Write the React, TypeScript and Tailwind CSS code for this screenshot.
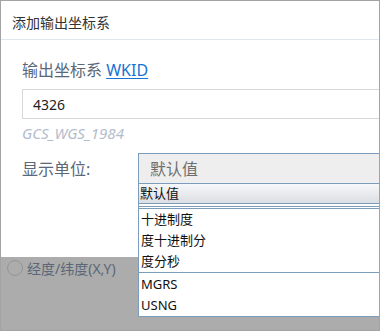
import React from 'react';

const units = ['十进制度', '度十进制分', '度分秒'];
const grids = ['MGRS', 'USNG'];

export default function App() {
  return (
    <div className="relative w-[380px] h-[331px] border border-[#a3a3a3] bg-white overflow-hidden flex flex-col font-['Noto_Sans','Noto_Sans_CJK_SC',sans-serif]">
      {/* header */}
      <div className="h-[39px] shrink-0 border-b border-[#e0e7ee] flex items-center pl-[11px] pt-[4px] text-[14px] text-[#333]">
        添加输出坐标系
      </div>

      {/* body */}
      <div className="h-[217px] shrink-0 pl-[21px] pt-[18px]">
        <div className="h-[24px] leading-[24px] text-[16px] text-[#5a6778]">
          输出坐标系 <span className="text-[#1873d3] underline underline-offset-2">WKID</span>
        </div>
        <div className="mt-[7px] w-[400px] h-[30px] border border-[#d7d7d7] pl-[10px] flex items-center text-[14px] text-[#222]">
          4326
        </div>
        <div className="mt-[4px] h-[20px] leading-[20px] italic text-[15px] text-[#b3bccb]">GCS_WGS_1984</div>
        <div className="mt-[10px] h-[31px] flex items-center">
          <div className="w-[116px] shrink-0 text-[16px] text-[#5a6778]">显示单位:</div>
          <div className="w-[260px] shrink-0 h-[31px] border border-[#7c9cbb] bg-[#eeeeee] pl-[11px] flex items-center text-[16px] text-[#6e6e6e]">
            默认值
          </div>
        </div>
      </div>

      {/* masked lower part */}
      <div className="flex-1 bg-[#acacac] pl-[6px] pt-[3px]">
        <div className="flex items-center h-[16px] gap-[4px]">
          <span className="w-[16px] h-[16px] rounded-full border border-[#959595]" />
          <span className="text-[14px] text-[#5b6676]">经度/纬度(X,Y)</span>
        </div>
      </div>

      {/* open dropdown */}
      <div className="absolute left-[137px] top-[182px] w-[260px] border border-[#7c9cbb] bg-white text-[13px] text-[#111]">
        <div className="h-[20px] border-b border-[#7c9cbb] bg-gradient-to-b from-[#f6f7f9] to-[#dcdfe3] px-[1px] flex items-center">
          默认值
        </div>
        <div className="mt-[2px] h-[3px] border-y border-[#7c9cbb]" />
        {units.map((u) => (
          <div key={u} className="h-[21px] px-[2px] flex items-center">
            {u}
          </div>
        ))}
        <div className="border-t border-[#7c9cbb] pt-[1px]">
          {grids.map((g) => (
            <div key={g} className="h-[21px] px-[2px] flex items-center">
              {g}
            </div>
          ))}
        </div>
      </div>
    </div>
  );
}
